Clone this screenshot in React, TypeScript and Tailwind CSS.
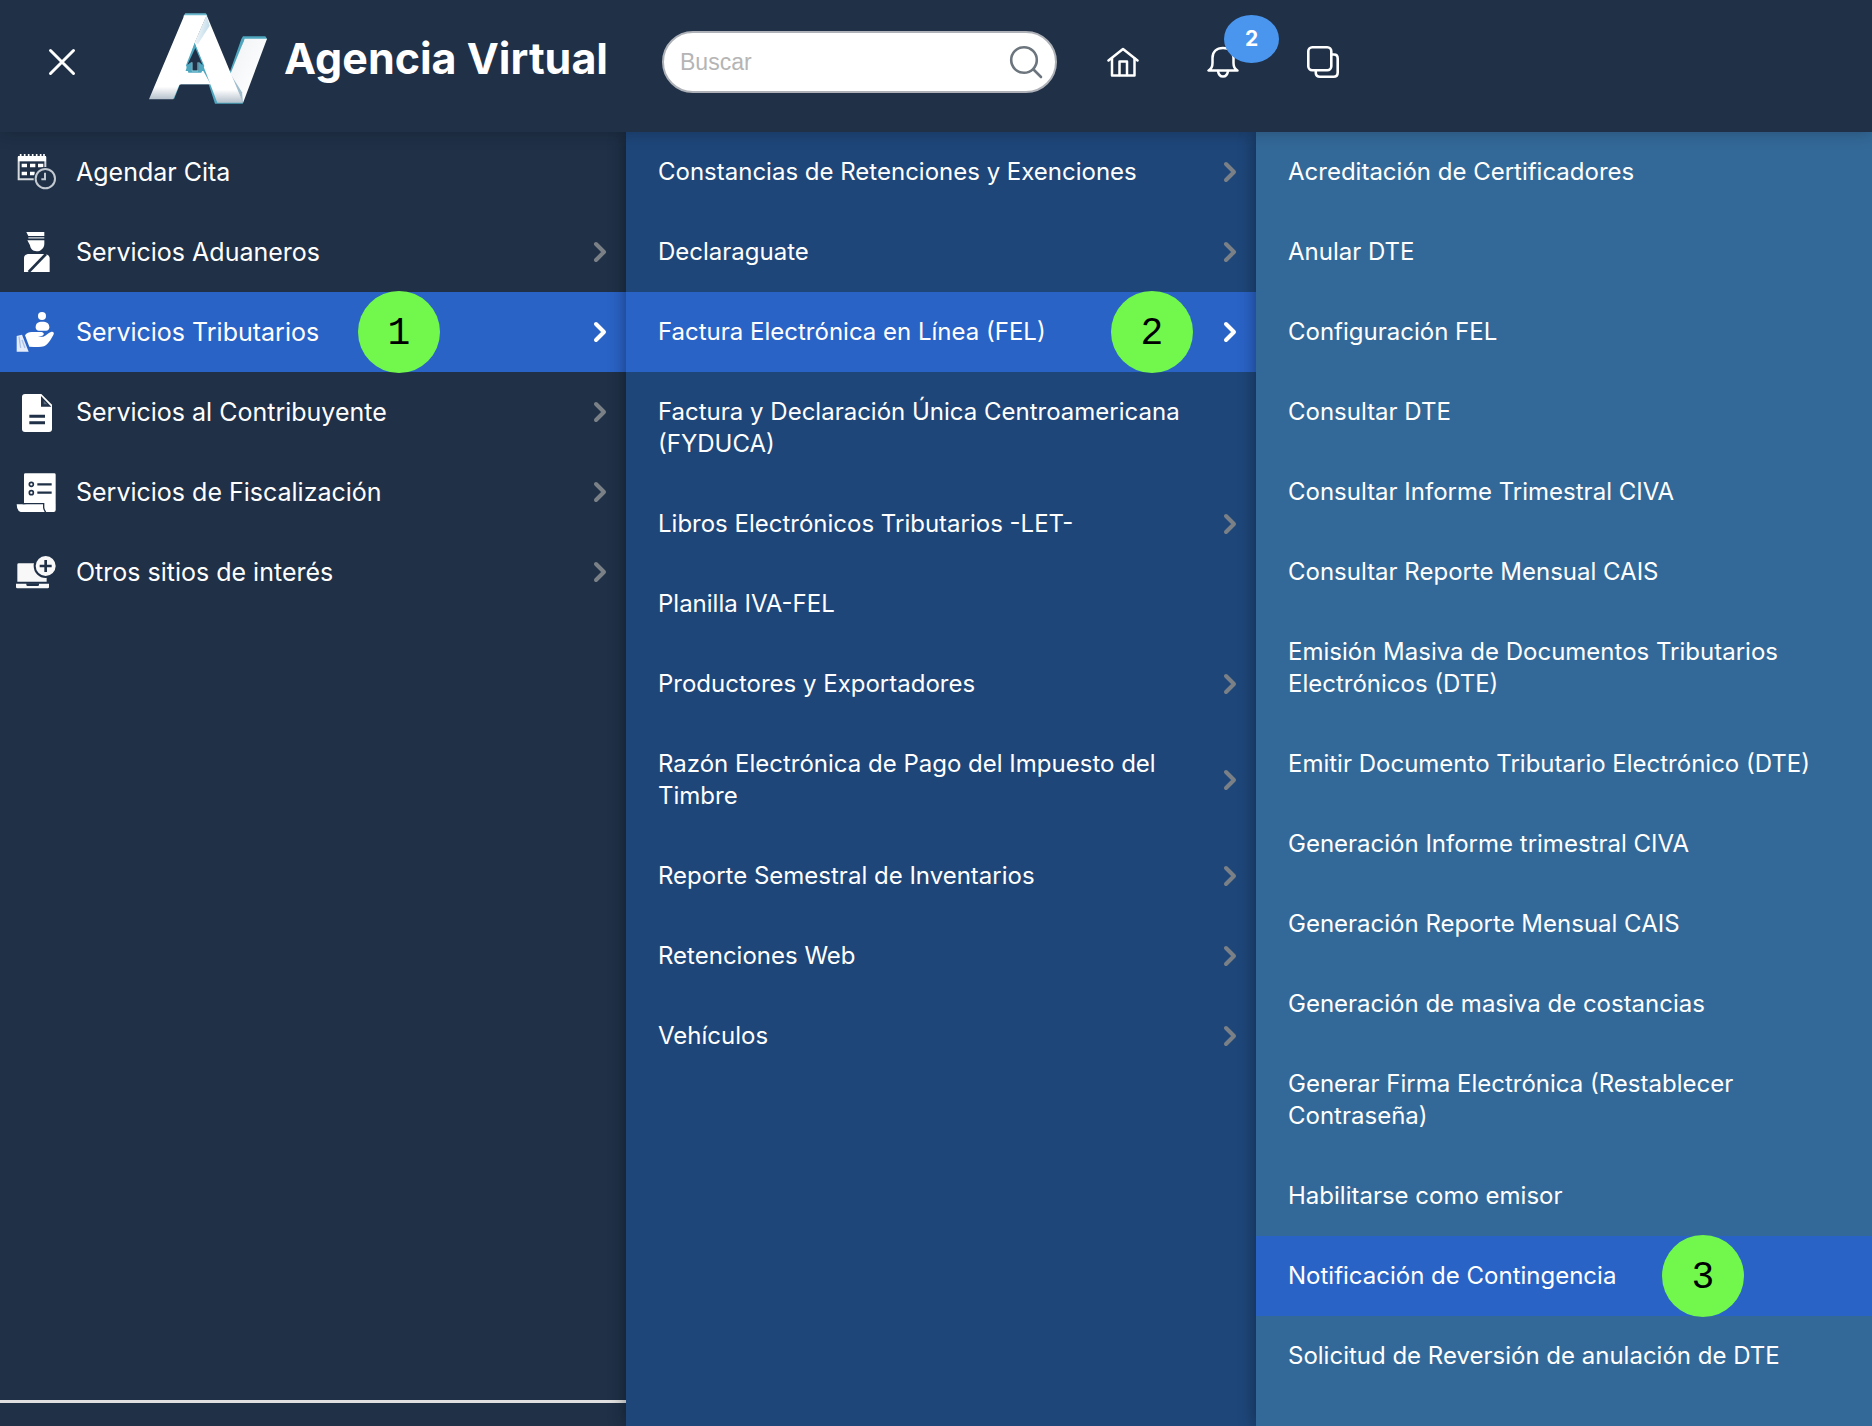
import type { ReactNode } from "react";
import clsx from "clsx";

type MenuItem = {
  label: string;
  icon?: ReactNode;
  hasChildren?: boolean;
  active?: boolean;
  step?: number;
};

const NAVY = "#1f3047";

function CalendarIcon() {
  return (
    <svg viewBox="0 0 120 120" className="size-10 shrink-0" fill="none" aria-hidden="true">
      <path d="M8 14V82H56M88 14V50" stroke="#d5d9de" strokeWidth="6" />
      <path d="M6 12H90V28H6Z" fill="#fff" />
      <path d="M14 6V14M26 6V14M38 6V14M50 6V14M62 6V14M74 6V14M84 6V14" stroke="#fff" strokeWidth="5" />
      <path d="M17 35H33V46H17ZM42 35H58V46H42ZM66 35H82V46H66ZM17 59H33V70H17ZM42 59H56V70H42Z" fill="#fff" />
      <circle cx="88" cy="80" r="35" fill={NAVY} />
      <circle cx="88" cy="80" r="29" stroke="#c3c9d0" strokeWidth="6" />
      <path d="M87 62V82H76" stroke="#c3c9d0" strokeWidth="6" />
    </svg>
  );
}

function OfficerIcon() {
  return (
    <svg viewBox="0 0 120 120" className="size-10 shrink-0" fill="#fff" aria-hidden="true">
      <path d="M31 0H85V12H37Z" />
      <path d="M37 15H85V20H37Z" fill="#aab2bc" />
      <path d="M34 25H85V35C85 49 73 58 62 58C50 58 43 49 42 40Z" />
      <path d="M24 120V78C24 70 31 66 40 66H84C94 66 101 71 101 80V120Z" />
      <path d="M90 66L38 120" stroke={NAVY} strokeWidth="8" />
    </svg>
  );
}

function HandIcon() {
  return (
    <svg viewBox="0 0 120 120" className="size-10 shrink-0" fill="#fff" aria-hidden="true">
      <circle cx="78" cy="12" r="12" />
      <path d="M59 46C59 34 66 29 79 29S100 34 100 46C100 53 96 56 90 56H69C63 56 59 53 59 46Z" />
      <path d="M27 70C32 63 39 60 47 60H76C84 60 86 69 79 71L66 74H82C92 70 98 62 105 60C112 58 116 63 112 69C104 83 96 98 84 103C72 107 55 104 40 104Z" />
      <path d="M2 72L18 68L38 119H2Z" fill="#e4ecf9" />
      <path d="M9 74L14 108M18 84L27 108" stroke="#a8c0ea" strokeWidth="4" />
    </svg>
  );
}

function DocumentIcon() {
  return (
    <svg viewBox="0 0 120 120" className="size-10 shrink-0" fill="#fff" aria-hidden="true">
      <path d="M27 6H76L108 38V111C108 117 105 120 99 120H27C21 120 18 117 18 111V15C18 9 21 6 27 6Z" />
      <path d="M75 12V44H106Z" fill={NAVY} />
      <path d="M83 26V37H94Z" fill="#59677a" />
      <path d="M40 73H87M40 92H87" stroke={NAVY} strokeWidth="9" />
    </svg>
  );
}

function ScrollIcon() {
  return (
    <svg viewBox="0 0 120 120" className="size-10 shrink-0" fill="#fff" aria-hidden="true">
      <path d="M28 4H115Q119 4 119 8V114Q119 120 113 120H90L24 96V8Q24 4 28 4Z" />
      <path d="M2 97H81V106Q82 116 88 120H14Q3 117 2 97Z" />
      <path d="M20 95H83V106Q84 115 89 120" fill="none" stroke={NAVY} strokeWidth="4" />
      <g fill="none" stroke={NAVY}>
        <circle cx="46" cy="37" r="6" strokeWidth="5" />
        <circle cx="46" cy="62" r="6" strokeWidth="5" />
        <path d="M64 37H107M64 62H107" strokeWidth="7" />
      </g>
    </svg>
  );
}

function LaptopIcon() {
  return (
    <svg viewBox="0 0 120 120" className="size-10 shrink-0" fill="#f8f8f8" aria-hidden="true">
      <path d="M8 34H92V89H4V38Q4 34 8 34Z" />
      <path d="M0 95H99V105Q99 109 95 109H4Q0 109 0 105Z" />
      <path d="M31 94H69V98Q69 102 65 102H35Q31 102 31 98Z" fill={NAVY} />
      <circle cx="89" cy="42" r="36" fill={NAVY} />
      <circle cx="89" cy="42" r="30" />
      <path d="M89 24V60M71 42H107" stroke={NAVY} strokeWidth="8" />
    </svg>
  );
}

function Chevron({ active }: { active?: boolean }) {
  return (
    <svg
      viewBox="0 0 14 22"
      className={clsx("w-[14px] h-[22px] shrink-0", active ? "text-white" : "text-[#7b8087]")}
      fill="none"
      stroke="currentColor"
      strokeWidth="4"
      strokeLinecap="round"
      strokeLinejoin="round"
      aria-hidden="true"
    >
      <path d="M3 3L11 11L3 19" />
    </svg>
  );
}

function Logo() {
  return (
    <svg viewBox="24 21 360 276" className="w-[120px] h-[92px] shrink-0" aria-hidden="true">
      <defs>
        <linearGradient id="foot" x1="0" y1="0" x2="0" y2="1">
          <stop offset="0.85" stopColor="#fff" />
          <stop offset="1" stopColor="#b4c0cb" />
        </linearGradient>
        <linearGradient id="fold" x1="0" y1="0" x2="1" y2="0.35">
          <stop offset="0" stopColor="#fff" />
          <stop offset="1" stopColor="#c2dcea" />
        </linearGradient>
        <linearGradient id="leg" x1="0" y1="0" x2="1" y2="1">
          <stop offset="0.2" stopColor="#f3f5f7" />
          <stop offset="0.8" stopColor="#fff" />
        </linearGradient>
      </defs>
      <path d="M130 33L136 25H197L202 31L198 38H132Z" fill="#6bb7cc" />
      <path d="M304 102L309 94H376L381 101L378 106H312L276 215L268 205Z" fill="#4fa7bf" />
      <path d="M314 101H381L309 294L270 210Z" fill="url(#leg)" />
      <path d="M270 205L309 294L306 262Z" fill="#9fbdcd" />
      <path d="M102 283L120 238H206L225 296H309L306 288H235L212 236L165 110L135 182L100 280Z" fill="#4fa7bf" />
      <path d="M133 31H200L164 114L124 237L118 239L100 283H27Z" fill="url(#foot)" />
      <path d="M120 198H190L212 238H112Z" fill="#fff" />
      <path d="M200 31L309 293H232L164 114Z" fill="url(#foot)" />
      <path d="M200 33L164 114L174 117L209 62Z" fill="url(#fold)" />
      <path d="M164 114L193 183L184 203H145L138 181Z" fill="#4fa7bf" />
      <path d="M166 129L188 181L176 170V197H155V170L142 180Z" fill={NAVY} />
      <path d="M156 172V198H174V172" fill="none" stroke="#8fd0df" strokeWidth="3" />
    </svg>
  );
}

function HomeIcon() {
  return (
    <svg viewBox="0 0 32 32" className="size-8" fill="none" stroke="#fff" strokeWidth="2.5" strokeLinecap="round" strokeLinejoin="round" aria-hidden="true">
      <path d="M1.5 14.5L16 3L30.5 14.5" />
      <path d="M5 12.5V29.5H27.5V12.5" />
      <path d="M12.5 29V15.5H20V29" />
    </svg>
  );
}

function BellIcon() {
  return (
    <svg viewBox="0 0 32 32" className="size-8" fill="none" stroke="#fff" strokeWidth="2.5" strokeLinecap="round" strokeLinejoin="round" aria-hidden="true">
      <path d="M1.5 24.5H30.5C27.5 23 26.5 20.5 26.5 17V12C26.5 5.5 22.5 2 16 2S5.5 5.5 5.5 12V17C5.5 20.5 4.5 23 1.5 24.5Z" />
      <path d="M11 25C11.5 28.5 13.5 30.5 16 30.5S20.5 28.5 21 25" />
    </svg>
  );
}

function WindowsIcon() {
  return (
    <svg viewBox="0 0 32 32" className="size-8" fill="none" stroke="#fff" strokeWidth="2.6" aria-hidden="true">
      <rect x="1.3" y="1.3" width="23" height="23" rx="4" />
      <path d="M24.5 8.500H27Q30.7 8.500 30.7 12.500V26.500Q30.7 30.7 26.5 30.7H13Q8.8 30.7 8.8 27V24.5" />
    </svg>
  );
}

const services: MenuItem[] = [
  { label: "Agendar Cita", icon: <CalendarIcon /> },
  { label: "Servicios Aduaneros", icon: <OfficerIcon />, hasChildren: true },
  { label: "Servicios Tributarios", icon: <HandIcon />, hasChildren: true, active: true, step: 1 },
  { label: "Servicios al Contribuyente", icon: <DocumentIcon />, hasChildren: true },
  { label: "Servicios de Fiscalización", icon: <ScrollIcon />, hasChildren: true },
  { label: "Otros sitios de interés", icon: <LaptopIcon />, hasChildren: true },
];

const taxServices: MenuItem[] = [
  { label: "Constancias de Retenciones y Exenciones", hasChildren: true },
  { label: "Declaraguate", hasChildren: true },
  { label: "Factura Electrónica en Línea (FEL)", hasChildren: true, active: true, step: 2 },
  { label: "Factura y Declaración Única Centroamericana (FYDUCA)" },
  { label: "Libros Electrónicos Tributarios -LET-", hasChildren: true },
  { label: "Planilla IVA-FEL" },
  { label: "Productores y Exportadores", hasChildren: true },
  { label: "Razón Electrónica de Pago del Impuesto del Timbre", hasChildren: true },
  { label: "Reporte Semestral de Inventarios", hasChildren: true },
  { label: "Retenciones Web", hasChildren: true },
  { label: "Vehículos", hasChildren: true },
];

const felOptions: MenuItem[] = [
  { label: "Acreditación de Certificadores" },
  { label: "Anular DTE" },
  { label: "Configuración FEL" },
  { label: "Consultar DTE" },
  { label: "Consultar Informe Trimestral CIVA" },
  { label: "Consultar Reporte Mensual CAIS" },
  { label: "Emisión Masiva de Documentos Tributarios Electrónicos (DTE)" },
  { label: "Emitir Documento Tributario Electrónico (DTE)" },
  { label: "Generación Informe trimestral CIVA" },
  { label: "Generación Reporte Mensual CAIS" },
  { label: "Generación de masiva de costancias" },
  { label: "Generar Firma Electrónica (Restablecer Contraseña)" },
  { label: "Habilitarse como emisor" },
  { label: "Notificación de Contingencia", active: true, step: 3 },
  { label: "Solicitud de Reversión de anulación de DTE" },
  { label: "Solicitud de Reversión de estado de DTE" },
];

function MenuList({
  items,
  linkClass,
  stepClass,
}: {
  items: MenuItem[];
  linkClass: string;
  stepClass: string;
}) {
  return (
    <ul>
      {items.map((item) => (
        <li key={item.label} className={clsx("relative", item.active && "bg-[#2a63c6]")}>
          <a href="#" className={clsx("flex items-center min-h-20 pr-[19px] leading-8 text-white", linkClass)}>
            {item.icon}
            <span className="flex-1">{item.label}</span>
            {item.hasChildren && <Chevron active={item.active} />}
          </a>
          {item.step && (
            <span
              className={clsx(
                "absolute -top-px size-[82px] rounded-full bg-[#72f74c] flex items-center justify-center pt-1 font-['Liberation_Mono',monospace] text-[38px] leading-none text-black",
                stepClass
              )}
            >
              {item.step}
            </span>
          )}
        </li>
      ))}
    </ul>
  );
}

export default function App() {
  return (
    <div className="h-screen overflow-hidden flex flex-col bg-[#1f3047] font-['Inter',sans-serif] text-white">
      <header className="relative z-30 h-[132px] shrink-0 flex items-center pl-12 pb-2 bg-[#1f3047] shadow-[0_0_16px_rgba(0,0,0,0.25)]">
        <button type="button" aria-label="Cerrar menú" className="shrink-0">
          <svg viewBox="0 0 28 28" className="size-7" stroke="#fff" strokeWidth="3" strokeLinecap="round" aria-hidden="true">
            <path d="M2.5 2.5L25.5 25.5M25.5 2.5L2.5 25.5" />
          </svg>
        </button>
        <a href="#" className="ml-[72px] w-[514px] shrink-0 flex items-center gap-4 pb-2">
          <Logo />
          <span className="text-[43px] leading-none font-bold whitespace-nowrap">Agencia Virtual</span>
        </a>
        <form className="relative w-[395px] shrink-0">
          <input
            type="search"
            aria-label="Buscar"
            placeholder="Buscar"
            className="w-full h-[62px] rounded-full border-2 border-[#aeb2b8] bg-white pl-4 pr-16 font-['Liberation_Sans',sans-serif] text-[23px] text-gray-700 placeholder:text-[#b5b5b5]"
          />
          <button type="button" aria-label="Iniciar búsqueda" className="absolute right-3.5 top-3.5">
            <svg viewBox="0 0 34 34" className="size-[34px]" fill="none" stroke="#6c757d" strokeWidth="2.6" strokeLinecap="round" aria-hidden="true">
              <circle cx="15" cy="15" r="12.8" />
              <path d="M24.5 24.5L32 32" />
            </svg>
          </button>
        </form>
        <nav className="ml-[50px] flex gap-[68px]">
          <a href="#" aria-label="Inicio">
            <HomeIcon />
          </a>
          <a href="#" aria-label="Notificaciones" className="relative">
            <BellIcon />
            <span className="absolute left-[17px] top-[-31px] w-[55px] h-12 rounded-[50%] bg-[#4a96ee] flex items-center justify-center text-[21px] font-bold">
              2
            </span>
          </a>
          <a href="#" aria-label="Ventanas">
            <WindowsIcon />
          </a>
        </nav>
      </header>

      <main className="flex-1 min-h-0 flex">
        <aside className="w-[626px] shrink-0 flex flex-col bg-[#1f3047]">
          <nav className="flex-1" aria-label="Servicios">
            <MenuList items={services} linkClass="pl-4 gap-5 text-[25px]" stepClass="left-[358px]" />
          </nav>
          <div className="h-[26px] border-t-[3px] border-[#e0e0e0]" />
        </aside>
        <nav
          aria-label="Servicios Tributarios"
          className="relative z-10 w-[630px] shrink-0 bg-[#1e4679] shadow-[0_0_16px_rgba(0,0,0,0.4)]"
        >
          <MenuList items={taxServices} linkClass="pl-8 py-6 text-2xl/8" stepClass="left-[485px]" />
        </nav>
        <nav
          aria-label="Factura Electrónica en Línea"
          className="relative z-20 flex-1 bg-[#336998] shadow-[0_0_16px_rgba(0,0,0,0.4)]"
        >
          <MenuList items={felOptions} linkClass="pl-8 py-6 text-2xl/8" stepClass="left-[406px]" />
        </nav>
      </main>
    </div>
  );
}
